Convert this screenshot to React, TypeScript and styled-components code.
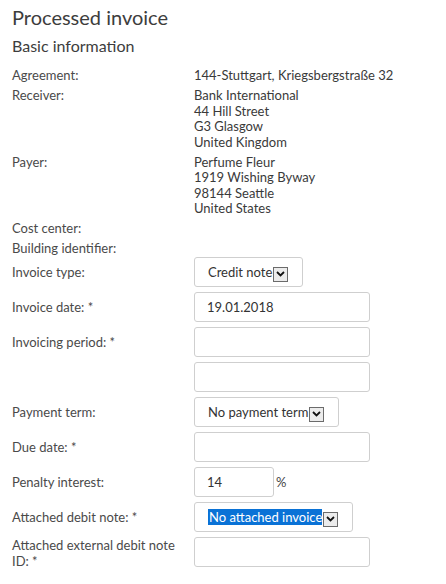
import React from "react";
import styled, { createGlobalStyle } from "styled-components";

const Global = createGlobalStyle`
  html, body { margin: 0; padding: 0; background: #fff; }
  body { font-family: Lato, "Open Sans", sans-serif; color: #444; }
`;

const Page = styled.div`
  padding: 5px 12px 0 12px;
  width: 446px;
  box-sizing: border-box;
`;

const Title = styled.h1`
  font-family: Lato, sans-serif;
  font-weight: 400;
  font-size: 20px;
  line-height: 24px;
  margin: 0 0 7px 0;
  color: #3d3d3d;
`;

const Subtitle = styled.h2`
  font-family: Lato, sans-serif;
  font-weight: 400;
  font-size: 16px;
  line-height: 20px;
  margin: 0 0 12px 0;
  color: #3d3d3d;
`;

const InfoList = styled.div`
  display: flex;
  flex-direction: column;
  gap: 4.5px;
`;

const InfoRow = styled.div`
  display: grid;
  grid-template-columns: 182px 1fr;
  font-size: 13px;
  line-height: 15.5px;
`;

const Label = styled.div`
  color: #4a4a4a;
`;

const Value = styled.div`
  color: #3a3a3a;
`;

const FormList = styled.div`
  display: flex;
  flex-direction: column;
  gap: 5px;
  margin-top: 0.5px;
`;

const FormRow = styled.div`
  display: grid;
  grid-template-columns: 182px 1fr;
  align-items: start;
  font-size: 13px;
  line-height: 16px;
`;

const FormLabel = styled.div`
  display: flex;
  align-items: center;
  min-height: 30px;
  max-width: 172px;
  color: #4a4a4a;
`;

const Fields = styled.div`
  display: flex;
  flex-direction: column;
  gap: 5px;
`;

const Inline = styled.div`
  display: flex;
  align-items: center;
  gap: 2px;
`;

const Input = styled.div<{ $w?: number }>`
  box-sizing: border-box;
  width: ${(p) => p.$w ?? 176}px;
  height: 30px;
  border: 1px solid #cfcfcf;
  border-radius: 3px;
  padding: 0 12px;
  display: flex;
  align-items: center;
  font-family: Lato, sans-serif;
  font-size: 13px;
  color: #333;
`;

const Select = styled.div`
  box-sizing: border-box;
  height: 30px;
  border: 1px solid #cfcfcf;
  border-radius: 3px;
  padding: 0 14px 0 13px;
  display: inline-flex;
  align-items: center;
  align-self: flex-start;
  font-family: Lato, sans-serif;
  font-size: 13px;
  color: #333;
`;

const SelectText = styled.span<{ $sel?: boolean }>`
  background: ${(p) => (p.$sel ? "#0a72d6" : "transparent")};
  color: ${(p) => (p.$sel ? "#fff" : "#333")};
  line-height: 16px;
  padding-left: ${(p) => (p.$sel ? "1px" : "0")};
`;

const Arrow = styled.span`
  box-sizing: border-box;
  width: 15px;
  height: 15px;
  margin-top: 4px;
  border: 1px solid #6b6b6b;
  background: #ececec;
  display: inline-flex;
  align-items: center;
  justify-content: center;
  margin-left: 1px;
`;

const Unit = styled.span`
  font-size: 13px;
  color: #444;
`;

const Chevron = () => (
  <Arrow>
    <svg width="9" height="6" viewBox="0 0 9 6">
      <path d="M1 1 L4.5 4.5 L8 1" fill="none" stroke="#111" strokeWidth="1.8" />
    </svg>
  </Arrow>
);

const info: [string, string[]][] = [
  ["Agreement:", ["144-Stuttgart, Kriegsbergstraße 32"]],
  ["Receiver:", ["Bank International", "44 Hill Street", "G3 Glasgow", "United Kingdom"]],
  ["Payer:", ["Perfume Fleur", "1919 Wishing Byway", "98144 Seattle", "United States"]],
  ["Cost center:", []],
  ["Building identifier:", []],
];

export default function App() {
  return (
    <Page>
      <Global />
      <Title>Processed invoice</Title>
      <Subtitle>Basic information</Subtitle>
      <InfoList>
        {info.map(([l, v]) => (
          <InfoRow key={l}>
            <Label>{l}</Label>
            <Value>
              {v.map((line) => (
                <div key={line}>{line}</div>
              ))}
            </Value>
          </InfoRow>
        ))}
      </InfoList>
      <FormList>
        <FormRow>
          <FormLabel>Invoice type:</FormLabel>
          <Fields>
            <Select>
              <SelectText>Credit note</SelectText>
              <Chevron />
            </Select>
          </Fields>
        </FormRow>
        <FormRow>
          <FormLabel>Invoice date: *</FormLabel>
          <Fields>
            <Input>19.01.2018</Input>
          </Fields>
        </FormRow>
        <FormRow>
          <FormLabel>Invoicing period: *</FormLabel>
          <Fields>
            <Input />
            <Input />
          </Fields>
        </FormRow>
        <FormRow>
          <FormLabel>Payment term:</FormLabel>
          <Fields>
            <Select>
              <SelectText>No payment term</SelectText>
              <Chevron />
            </Select>
          </Fields>
        </FormRow>
        <FormRow>
          <FormLabel>Due date: *</FormLabel>
          <Fields>
            <Input />
          </Fields>
        </FormRow>
        <FormRow>
          <FormLabel>Penalty interest:</FormLabel>
          <Fields>
            <Inline>
              <Input $w={80}>14</Input>
              <Unit>%</Unit>
            </Inline>
          </Fields>
        </FormRow>
        <FormRow>
          <FormLabel>Attached debit note: *</FormLabel>
          <Fields>
            <Select>
              <SelectText $sel>No attached invoice</SelectText>
              <Chevron />
            </Select>
          </Fields>
        </FormRow>
        <FormRow>
          <FormLabel>Attached external debit note ID: *</FormLabel>
          <Fields>
            <Input />
          </Fields>
        </FormRow>
      </FormList>
    </Page>
  );
}
